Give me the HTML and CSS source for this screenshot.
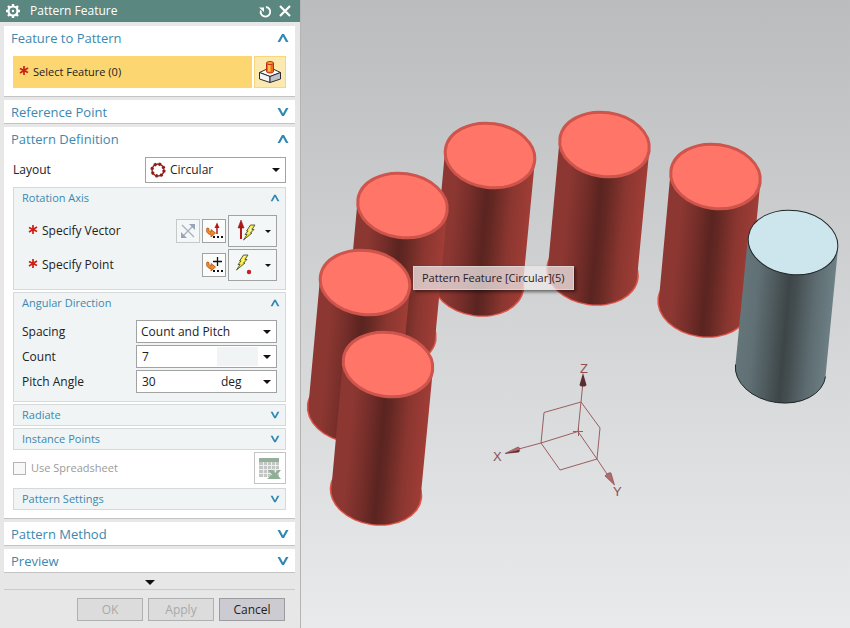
FILE: index.html
```html
<!DOCTYPE html>
<html lang="en">
<head>
<meta charset="utf-8">
<title>Pattern Feature</title>
<link rel="stylesheet" href="styles.css">
</head>
<body>
<svg class="defs" width="0" height="0" aria-hidden="true">
  <defs>
    <symbol id="up" viewBox="0 0 12 10"><path d="M0.500 9 5 1h2l4.500 8H9L6 3.500 3 9z" fill="#3087b3"/></symbol>
    <symbol id="down" viewBox="0 0 12 10"><path d="M0.500 1 5 9h2l4.500-8H9L6 6.500 3 1z" fill="#3087b3"/></symbol>
    <symbol id="caret" viewBox="0 0 8 4"><path d="M0 0h8L4 4z" fill="#111"/></symbol>
    <symbol id="star" viewBox="0 0 10 12"><path d="M5 0v9M1 2.500l8 4M9 2 1 7" stroke="#cc1f16" stroke-width="1.700" fill="none"/></symbol>
    <symbol id="bolt" viewBox="0 0 14 17"><path d="M8.500 1H13L10 5.500h2L8.500 9H10L1.500 16 5 10.500H3L6 7H4.500z" fill="#f3e43c" stroke="#55532a" stroke-width="0.900"/><path d="M10 2 7.500 6H9L6 9.500" stroke="#fffdc8" fill="none"/></symbol>
    <symbol id="hook" viewBox="0 0 18 18"><path d="M2 6c-1.500 4 1 6.500 4 6.500V15l4.500-4L6 7.500V10C4.500 10 3.500 8.500 4 6.500z" fill="#f08a28" stroke="#b5520d" stroke-width="0.800"/><path d="M8 14h2v2H8zM12 14h2v2h-2zM16 14h2v2h-2z" fill="#111"/></symbol>
  </defs>
</svg>
<div class="app">
  <aside class="dialog">
    <header class="titlebar">
      <svg width="16" height="16" viewBox="0 0 16 16"><circle cx="8" cy="8" r="4.500" fill="none" stroke="#fff" stroke-width="2.200"/><g stroke="#fff" stroke-width="2.400"><path d="M8 1v2.500M8 12.500V15M1 8h2.500M12.500 8H15M3 3l2 2M11 11l2 2M13 3l-2 2M5 11l-2 2"/></g><circle cx="8" cy="8" r="1.200" fill="#fff"/></svg>
      <h1>Pattern Feature</h1>
      <button type="button" aria-label="Reset"><svg width="14" height="14" viewBox="0 0 14 14"><path d="M8 3A4.800 4.800 0 1 1 2.800 6.500" fill="none" stroke="#fff" stroke-width="1.800"/><path d="M1 3.500H6V8z" fill="#fff"/></svg></button>
      <button type="button" aria-label="Close"><svg width="14" height="14" viewBox="0 0 14 14"><path d="M2 2l10 10M12 2 2 12" stroke="#fff" stroke-width="2.200"/></svg></button>
    </header>

    <form class="sections">
      <section class="section">
        <button type="button" class="head">Feature to Pattern<svg width="12" height="10"><use href="#up"/></svg></button>
        <div class="body">
          <div class="pick">
            <div class="pick-label"><svg width="10" height="12"><use href="#star"/></svg>Select Feature (0)</div>
            <button type="button" class="pick-button" aria-label="Feature"><svg width="24" height="24" viewBox="0 0 24 24"><g stroke="#2b2b30" stroke-linejoin="round"><path d="M1.500 12.500 9 9h6l7.500 3.500L12 16.500z" fill="#fff"/><path d="M1.500 12.500 12 16.500v6L1.500 19z" fill="#f4f4f6"/><path d="M22.500 12.500 12 16.500v6L22.500 19z" fill="#bfc2ca"/></g><path d="M8.500 3v8.500c0 2 7 2 7 0V3z" fill="#ef6a1c" stroke="#c22a10"/><path d="M10 4v7.500h2.500V4z" fill="#ffc04a"/><ellipse cx="12" cy="3" rx="3.500" ry="1.500" fill="#ffa53a" stroke="#c22a10"/></svg></button>
          </div>
        </div>
      </section>

      <section class="section">
        <button type="button" class="head">Reference Point<svg width="12" height="10"><use href="#down"/></svg></button>
      </section>

      <section class="section">
        <button type="button" class="head">Pattern Definition<svg width="12" height="10"><use href="#up"/></svg></button>
        <div class="body stack">
          <div class="row layout-row">
            <label for="layout">Layout</label>
            <span class="field tall">
              <svg class="lead" width="16" height="16" viewBox="0 0 16 16"><circle cx="8" cy="8" r="6" fill="none" stroke="#8d1d1d" stroke-width="1.400"/><circle cx="8" cy="8" r="6" fill="none" stroke="#8d1d1d" stroke-width="3.200" stroke-dasharray="2.200 2.512"/></svg>
              <select id="layout"><option>Circular</option></select>
              <svg class="caret" width="8" height="4"><use href="#caret"/></svg>
            </span>
          </div>

          <div class="group">
            <button type="button" class="subhead">Rotation Axis<svg width="10" height="8"><use href="#up"/></svg></button>
            <div class="rows">
              <div class="row required">
                <svg width="10" height="12"><use href="#star"/></svg><span class="grow">Specify Vector</span>
                <button type="button" class="tool off" disabled aria-label="Reverse direction"><svg width="18" height="18" viewBox="0 0 18 18"><path d="M3 3l12 12M4 14 14 4" stroke="#a9b0bf" stroke-width="1.300"/><path d="M16 2v6l-6-6zM2 16v-6l6 6z" fill="#9aa3b8"/></svg></button>
                <button type="button" class="tool" aria-label="Vector dialog"><svg width="18" height="18" viewBox="0 0 18 18"><use href="#hook"/><path d="M12 12V4" stroke="#b51616" stroke-width="1.500"/><path d="M12 0.500 14.500 6h-5z" fill="#b51616"/></svg></button>
                <button type="button" class="tool wide" aria-label="Inferred vector"><svg width="24" height="24" viewBox="0 0 24 24"><path d="M6 20V7" stroke="#b51616" stroke-width="2"/><path d="M6 1 9 9H3z" fill="#b51616" stroke="#7c1010" stroke-width="0.500"/><use href="#bolt" x="7" y="5" width="14" height="17"/></svg><svg width="6" height="3" viewBox="0 0 8 4"><use href="#caret"/></svg></button>
              </div>
              <div class="row required">
                <svg width="10" height="12"><use href="#star"/></svg><span class="grow">Specify Point</span>
                <button type="button" class="tool" aria-label="Point dialog"><svg width="18" height="18" viewBox="0 0 18 18"><use href="#hook"/><path d="M8 5.500h9M12.500 1v9" stroke="#111" stroke-width="1.300"/></svg></button>
                <button type="button" class="tool wide" aria-label="Inferred point"><svg width="24" height="24" viewBox="0 0 24 24"><use href="#bolt" x="0" y="1" width="14" height="17"/><circle cx="14" cy="19" r="2.200" fill="#c81e28"/></svg><svg width="6" height="3" viewBox="0 0 8 4"><use href="#caret"/></svg></button>
              </div>
            </div>
          </div>

          <div class="group">
            <button type="button" class="subhead">Angular Direction<svg width="10" height="8"><use href="#up"/></svg></button>
            <div class="rows">
              <div class="row">
                <label for="spacing">Spacing</label>
                <span class="field"><select id="spacing"><option>Count and Pitch</option></select><svg class="caret" width="8" height="4"><use href="#caret"/></svg></span>
              </div>
              <div class="row">
                <label for="count">Count</label>
                <span class="field"><input id="count" type="text" value="7"><span class="unit empty"></span><button type="button" class="drop" aria-label="Count options"><svg width="8" height="4"><use href="#caret"/></svg></button></span>
              </div>
              <div class="row">
                <label for="pitch">Pitch Angle</label>
                <span class="field"><input id="pitch" type="text" value="30"><span class="unit">deg</span><button type="button" class="drop" aria-label="Angle options"><svg width="8" height="4"><use href="#caret"/></svg></button></span>
              </div>
            </div>
          </div>

          <div class="group"><button type="button" class="subhead">Radiate<svg width="10" height="8"><use href="#down"/></svg></button></div>
          <div class="group"><button type="button" class="subhead">Instance Points<svg width="10" height="8"><use href="#down"/></svg></button></div>

          <div class="row sheet">
            <input type="checkbox" id="sheet" disabled><label for="sheet">Use Spreadsheet</label>
            <button type="button" class="sheet-button" disabled aria-label="Spreadsheet"><svg width="24" height="24" viewBox="0 0 24 24"><path d="M1 2h20v19H1z" fill="#c3c6c5"/><path d="M1 2h20v4H1z" fill="#93b09a"/><path d="M5.500 6v15M9.500 6v15M13.500 6v15M17.500 6v15M1 9.500h20M1 13.500h20M1 17.500h20" stroke="#eceeed"/><path d="M10 14h5l2 3 3-3h3l-4 4.500 4 4.500H9l5-4.500z" fill="#8fae96"/></svg></button>
          </div>

          <div class="group"><button type="button" class="subhead">Pattern Settings<svg width="10" height="8"><use href="#down"/></svg></button></div>
        </div>
      </section>

      <section class="section">
        <button type="button" class="head">Pattern Method<svg width="12" height="10"><use href="#down"/></svg></button>
      </section>
      <section class="section">
        <button type="button" class="head">Preview<svg width="12" height="10"><use href="#down"/></svg></button>
      </section>

      <div class="more"><svg width="10" height="5" viewBox="0 0 8 4"><use href="#caret"/></svg></div>
      <footer class="actions">
        <button type="button" disabled>OK</button>
        <button type="button" disabled>Apply</button>
        <button type="button">Cancel</button>
      </footer>
    </form>
  </aside>

  <main class="viewport">
    <svg class="scene" viewBox="301 0 549 628" preserveAspectRatio="xMinYMin meet" role="img" aria-label="Circular pattern of cylinders">
      <defs>
        <linearGradient id="redBody" gradientUnits="userSpaceOnUse" x1="-45" y1="-4" x2="45" y2="4">
          <stop offset="0" stop-color="#8c3731"/><stop offset="0.150" stop-color="#8c3731"/><stop offset="0.330" stop-color="#762e2a"/><stop offset="0.500" stop-color="#5a2420"/><stop offset="0.580" stop-color="#642823"/><stop offset="0.780" stop-color="#8b3630"/><stop offset="1" stop-color="#a03d36"/>
        </linearGradient>
        <linearGradient id="grayBody" gradientUnits="userSpaceOnUse" x1="-45" y1="-4" x2="45" y2="4">
          <stop offset="0" stop-color="#64757a"/><stop offset="0.150" stop-color="#607075"/><stop offset="0.330" stop-color="#4f5b5e"/><stop offset="0.500" stop-color="#3d4547"/><stop offset="0.580" stop-color="#444e50"/><stop offset="0.780" stop-color="#5c6b70"/><stop offset="1" stop-color="#6d8085"/>
        </linearGradient>
        <g id="redCylinder">
          <ellipse cx="-12" cy="128" rx="46.500" ry="33" transform="rotate(8 -12 128)" fill="#dc544a"/>
          <path d="M-45-4-56.500 122A44.500 31.500 8 0 0 32.500 134L45 4z" fill="url(#redBody)"/>
          <ellipse rx="45" ry="32" transform="rotate(8)" fill="#ff7568" stroke="#cf544b" stroke-width="3"/>
        </g>
        <g id="grayCylinder">
          <path d="M-45-6-57.500 122A45 32 8 0 0 32.500 134L45 6z" fill="url(#grayBody)" stroke="none"/>
          <path d="M-57.500 122A45 32 8 0 0 32.500 134" fill="none" stroke="#1f2628"/>
          <ellipse rx="45" ry="32" transform="rotate(8)" fill="#cde5ec" stroke="#1f2628"/>
        </g>
      </defs>
      <use href="#redCylinder" x="604.500" y="144.500"/>
      <use href="#redCylinder" x="715.500" y="176.500"/>
      <use href="#redCylinder" x="490" y="155.500"/>
      <use href="#redCylinder" x="402.500" y="205.500"/>
      <use href="#redCylinder" x="365" y="282.500"/>
      <use href="#redCylinder" x="388" y="364.500"/>
      <use href="#grayCylinder" x="793" y="242.500"/>
      <g fill="none" stroke="#9a5e60">
        <path d="M581 402 544 412.500 541 443l19 27 37-11 3-31zM578 431.500 541 443l-26 7M578 431.500l19 27.500 12 18M578 431.500l3-29.500 2-20M573 431.500h10M578.500 427v9"/>
      </g>
      <path d="M583 373l3.500 12c-1 2-6 2-7 0z" fill="#5c2b33"/>
      <path d="M505 453.500 518 447c2 0 2 4 1 5z" fill="#b06c6c" stroke="#7d4145" stroke-width="0.600"/>
      <path d="M505 453.500 519 452l0-2z" fill="#5c2b33"/>
      <path d="M614.500 485 605 476c1-2 5-4 6-3z" fill="#b06c6c" stroke="#7d4145" stroke-width="0.600"/>
      <g class="axis-label"><text x="580" y="373">Z</text><text x="493" y="461">X</text><text x="613" y="496">Y</text></g>
    </svg>
    <div class="tooltip" role="tooltip">Pattern Feature [Circular](5)</div>
  </main>
</div>
</body>
</html>
```
FILE: styles.css
```css
* { box-sizing: border-box; }
body {
  margin: 0;
  font: 12px/16px "Open Sans", "Noto Sans", sans-serif;
  color: #222;
}
button, input, select { font: inherit; color: inherit; margin: 0; }
button { padding: 0; border: 0; background: none; }
svg { display: block; flex: none; }
.defs { position: absolute; }

.app { display: flex; min-height: 100vh; }
.dialog {
  flex: 0 0 301px;
  background: #e7e7e7;
  border-right: 1px solid #b4b4b4;
}
.titlebar {
  display: flex;
  align-items: center;
  gap: 6px;
  height: 22px;
  padding: 0 8px 0 5px;
  background: #5a877f;
  color: #fff;
}
.titlebar h1 { flex: 1; margin: 0 0 0 3px; font-size: 12px; font-weight: 400; }

.sections { display: flex; flex-direction: column; gap: 3px; padding: 4px 5px 0 4px; }
.section { background: #fff; border-bottom: 1px solid #c4c4c4; }
.head, .subhead {
  display: flex;
  align-items: center;
  justify-content: space-between;
  width: 100%;
  color: #3d88ae;
}
.head { height: 23px; padding: 0 6px 0 7px; font-size: 13px; }
.body { padding: 7px 9px 8px; }
.stack { display: flex; flex-direction: column; gap: 2px; }

.pick { display: flex; gap: 2px; height: 32px; }
.pick-label { flex: 1; display: flex; align-items: center; gap: 4px; padding-left: 6px; background: #fcd671; font-size: 11px; }
.pick-button, .sheet-button { width: 32px; height: 32px; display: grid; place-items: center; }
.pick-button { background: #fce9b0; border: 1px solid #f7d67c; }

.row { display: flex; align-items: center; }
.row > label, .grow { flex: 1; }
.layout-row { padding-bottom: 4px; margin-bottom: -2px; }

.field {
  position: relative;
  display: flex;
  align-items: center;
  width: 141px;
  height: 23px;
  background: #fff;
  border: 1px solid #a2a2a2;
}
.field.tall { height: 26px; }
.field select {
  appearance: none;
  width: 100%;
  height: 100%;
  padding: 0 20px 0 4px;
  border: 0;
  background: none;
}
.field.tall select { padding-left: 24px; }
.field input { flex: 1; min-width: 0; height: 100%; padding: 0 5px; border: 0; background: none; }
.lead { position: absolute; left: 4px; }
.caret { position: absolute; right: 5px; pointer-events: none; }
.unit { width: 41px; height: 19px; padding-left: 4px; line-height: 19px; }
.empty { background: #f0f4f5; }
.drop { width: 18px; height: 100%; display: grid; place-items: center; }

.group { background: #f0f4f5; border: 1px solid #d6d9da; }
.subhead { height: 20px; padding: 0 5px 0 8px; font-size: 11px; }
.rows { display: flex; flex-direction: column; gap: 2px; padding: 7px 8px 8px; }
.required { padding-left: 6px; gap: 2px; }
.required .grow { padding-left: 2px; }
.tool {
  display: flex;
  align-items: center;
  justify-content: center;
  width: 24px;
  height: 24px;
  background: #fbfcfc;
  border: 1px solid #a2a2a2;
}
.tool.wide { width: 49px; height: 32px; gap: 6px; background: #f4f7f8; }
.tool.off { border-color: #c6c9ca; background: #f4f7f8; }

.sheet { color: #9a9a9a; gap: 5px; padding-bottom: 2px; font-size: 11px; }
.sheet input { appearance: none; width: 13px; height: 13px; border: 1px solid #b4b4b4; background: #f8f8f8; }
.sheet-button { border: 1px solid #c4c4c4; background: #fff; }

.more { display: flex; justify-content: center; padding: 4px 0; border-bottom: 1px solid #cbcbcb; }
.actions { display: flex; justify-content: flex-end; gap: 5px; padding: 5px 10px 6px 0; }
.actions button { width: 66px; height: 23px; border: 1px solid #9c9ca0; background: #cbcbd1; }
.actions button:disabled { color: #a9a9a9; border-color: #b0b0b0; background: #dcdcdc; }

.viewport {
  position: relative;
  flex: 1;
  min-width: 0;
  background: linear-gradient(#bbbcbe, #d3d4d5 50%, #e8eaeb);
}
.scene { width: 100%; }
.axis-label { font: 13px "Liberation Sans", sans-serif; fill: #8c5054; }
.tooltip {
  position: absolute;
  left: 112px;
  top: 266px;
  height: 24px;
  padding: 0 8px;
  line-height: 22px;
  font-size: 11px;
  color: #2c2022;
  background: rgba(238, 234, 234, 0.75);
  border: 1px solid rgba(230, 225, 225, 0.6);
  box-shadow: 2px 2px 3px rgba(0, 0, 0, 0.5);
  white-space: nowrap;
}
```
